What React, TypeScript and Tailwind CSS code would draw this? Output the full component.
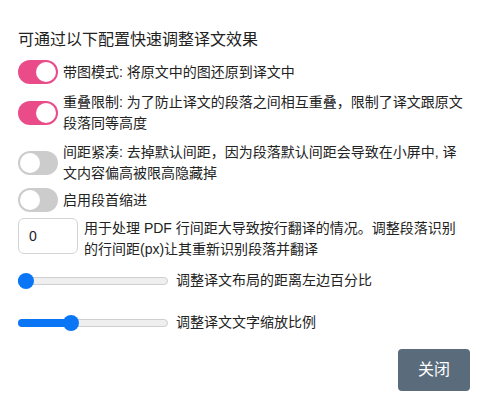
const font = { fontFamily: '"Liberation Sans", "Noto Sans CJK SC", sans-serif' };

function Toggle({ on }: { on: boolean }) {
  return (
    <div
      className={`relative h-[24px] w-[40px] shrink-0 rounded-full ${on ? 'bg-[#ea4c89]' : 'bg-[#cccccc]'}`}
    >
      <div
        className={`absolute top-[2px] h-[20px] w-[20px] rounded-full bg-white ${on ? 'left-[18px]' : 'left-[2px]'}`}
      />
    </div>
  );
}

function Slider({ pos }: { pos: number }) {
  return (
    <div className="relative h-[16px] w-[150px] shrink-0">
      <div className="absolute left-0 right-0 top-[4px] h-[8px] rounded-full border border-[#cfcfcf] bg-[#efefef]" />
      <div
        className="absolute left-0 top-[4px] h-[8px] rounded-full bg-[#0a76f6]"
        style={{ width: pos + 8 }}
      />
      <div
        className="absolute top-0 h-[16px] w-[16px] rounded-full bg-[#0a76f6]"
        style={{ left: pos }}
      />
    </div>
  );
}

const rows = [
  { on: true, text: '带图模式: 将原文中的图还原到译文中', mt: '' },
  { on: true, text: '重叠限制: 为了防止译文的段落之间相互重叠，限制了译文跟原文段落同等高度', mt: 'mt-[8px]' },
  { on: false, text: '间距紧凑: 去掉默认间距，因为段落默认间距会导致在小屏中, 译文内容偏高被限高隐藏掉', mt: 'mt-[8px]' },
  { on: false, text: '启用段首缩进', mt: 'mt-[4px]' },
];

export default function App() {
  return (
    <div className="h-[416px] w-[492px] bg-white text-[#222]" style={font}>
      <div className="flex flex-col px-[18px] pt-[28px]">
        <h2 className="mb-[8px] text-[16px] leading-[24px]">可通过以下配置快速调整译文效果</h2>

        <div className="flex w-[447px] flex-col">
          {rows.map((r, i) => (
            <div key={i} className={`flex items-center gap-[5px] ${r.mt}`}>
              <Toggle on={r.on} />
              <p className="text-[14px] leading-[21px]">{r.text}</p>
            </div>
          ))}

          <div className="mt-[6px] flex items-start gap-[6px]">
            <input
              defaultValue="0"
              className="h-[36px] w-[60px] shrink-0 rounded-[6px] border border-[#d4d4d4] px-[10px] text-[14px] outline-none"
              style={font}
            />
            <p className="text-[14px] leading-[21px]">
              用于处理 PDF 行间距大导致按行翻译的情况。调整段落识别的行间距(px)让其重新识别段落并翻译
            </p>
          </div>
        </div>

        <div className="mt-[10px] flex items-center gap-[8px]">
          <Slider pos={0} />
          <span className="text-[14px] leading-[21px]">调整译文布局的距离左边百分比</span>
        </div>

        <div className="mt-[21px] flex items-center gap-[8px]">
          <Slider pos={45} />
          <span className="text-[14px] leading-[21px]">调整译文文字缩放比例</span>
        </div>

        <div className="mt-[16px] flex justify-end pr-[4px]">
          <button className="h-[42px] w-[72px] rounded-[4px] bg-[#5a6b7b] text-[16px] text-white">
            关闭
          </button>
        </div>
      </div>
    </div>
  );
}
